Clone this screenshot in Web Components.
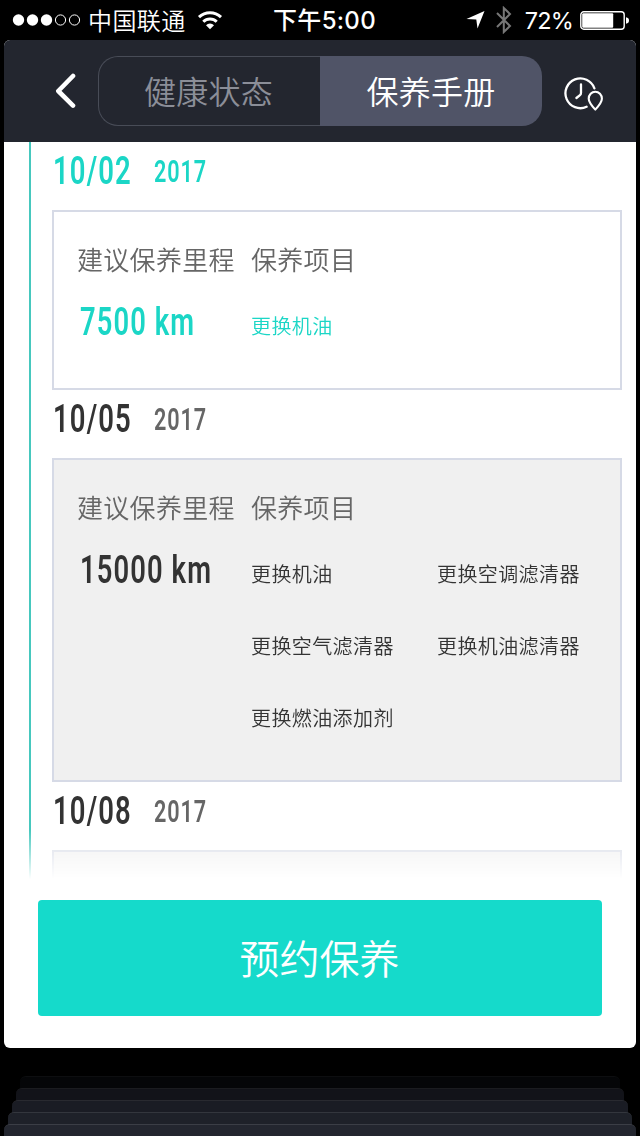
<!DOCTYPE html>
<html lang="zh-CN">
<head>
<meta charset="utf-8">
<title>保养手册</title>
<style>
body {
    margin: 0;
    width: 640px;
    height: 1136px;
    overflow: hidden;
    background: #000;
    font-family: "Noto Sans CJK SC", sans-serif;
    font-weight: 350;
}
</style>
</head>
<body>
<maintenance-app></maintenance-app>

<script>
const define = (name, html, setup) => {
    const template = document.createElement('template')
    template.innerHTML = html

    customElements.define(name, class extends HTMLElement {
        constructor() {
            super()
            this.attachShadow({ mode: 'open' })
            .appendChild(template.content.cloneNode(true))
        }

        connectedCallback() {
            if (setup) setup(this, this.shadowRoot)
        }
    })
}

/**
 * Narrow digits: the text is squeezed to the given width.
 * size is the font size, width the drawn length, both in px.
 */
define('narrow-text', `
<style>
:host { display: block; height: 28px; }
span {
    display: inline-block;
    font-family: Roboto, sans-serif;
    font-weight: 600;
    letter-spacing: 0.04em;
    white-space: pre;
    transform-origin: 0 0;
}
</style>
<span></span>
`, (host, root) => {
    const size = Number(host.getAttribute('size'))
    const width = Number(host.getAttribute('width'))
    const span = root.querySelector('span')
    host.style.width = `${width}px`
    span.textContent = host.getAttribute('value')
    span.style.fontSize = `${size}px`
    span.style.lineHeight = `${Math.round(size * 0.72)}px`
    span.style.marginLeft = '1px'
    span.style.transform = `scaleX(${(width + 1) / span.offsetWidth})`
})

define('status-bar', `
<style>
:host {
    display: flex;
    align-items: center;
    justify-content: space-between;
    height: 40px;
    padding: 0 11px 0 12px;
    box-sizing: border-box;
    color: #fff;
    font-size: 24px;
    line-height: 40px;
}
div { display: flex; align-items: center; flex: 1; }
svg { display: block; flex: none; }
.carrier { margin: 0 11px 0 7px; letter-spacing: 0.4px; }
.time { flex: none; font-family: Inter, "Noto Sans CJK SC", sans-serif; font-weight: 500; padding: 1px 0 0 8px; line-height: 39px; letter-spacing: 0.3px; }
.right { justify-content: flex-end; }
.percent { font-family: Inter, sans-serif; font-weight: 400; font-size: 23.5px; letter-spacing: -0.8px; margin: 1px 7px 0 13px; }
</style>
<div>
    <svg width="69" height="14" viewBox="0 0 69 14" fill="#fff">
        <circle cx="6.5" cy="7" r="5.7"/><circle cx="20.5" cy="7" r="5.7"/><circle cx="34.5" cy="7" r="5.7"/>
        <g fill="none" stroke="#fff"><circle cx="48.5" cy="7" r="5.1"/><circle cx="62.5" cy="7" r="5.1"/></g>
    </svg>
    <span class="carrier">中国联通</span>
    <svg width="26" height="20" viewBox="0 0 26 20" fill="none" stroke="#fff" stroke-width="3">
        <path d="M2 7.2a16 16 0 0 1 22 0M6.3 11.7a9.6 9.6 0 0 1 13.4 0"/>
        <path d="M13 19.2l-4-4a5.8 5.8 0 0 1 8 0z" fill="#fff" stroke="none"/>
    </svg>
</div>
<span class="time">下午5:00</span>
<div class="right">
    <svg width="19" height="18" viewBox="0 0 19 18"><path d="M18.5 0L11.5 17.5L10.3 8.6L.5 8z" fill="#fff"/></svg>
    <svg style="margin-left:11px" width="16" height="28" viewBox="0 0 16 28" fill="none" stroke="#777" stroke-width="2">
        <path d="M1 7l13 13l-6.2 6V2L14 8L1 21"/>
    </svg>
    <span class="percent">72%</span>
    <svg width="49" height="19" viewBox="0 0 49 19">
        <rect x=".8" y=".8" width="43.4" height="17.4" rx="3" fill="none" stroke="#fff" stroke-width="1.4"/>
        <rect x="2.2" y="2.2" width="31" height="14.6" rx="1" fill="#fff"/>
        <path d="M46 6.3q3 .5 3 3.2t-3 3.2z" fill="#fff"/>
    </svg>
</div>
`)

define('segment-tabs', `
<style>
:host {
    display: flex;
    width: 444px;
    height: 70px;
    font-size: 32px;
    line-height: 68px;
    text-align: center;
}
div { flex: none; width: 222px; box-sizing: border-box; letter-spacing: 0.3px; }
.off {
    border: 1.5px solid #484c57;
    border-right: 0;
    border-radius: 20px 0 0 20px;
    padding-right: 2px;
    line-height: 66px;
    color: #8b8e98;
}
.on { background: #505467; border-radius: 0 20px 20px 0; color: #fff; }
</style>
<div class="off"><slot name="off"></slot></div>
<div class="on"><slot name="on"></slot></div>
`)

define('nav-bar', `
<style>
:host {
    display: flex;
    align-items: center;
    height: 102px;
    padding-left: 51px;
    box-sizing: border-box;
    background: #23262f;
}
.back { margin-right: 20px; }
.history { margin: 5px 0 0 20px; }
</style>
<svg class="back" width="23" height="36" viewBox="0 0 23 36" fill="none" stroke="#fff" stroke-width="4.6" stroke-linecap="round" stroke-linejoin="round">
    <path d="M22 3L7.3 18L22 32.6" transform="translate(-4 0)"/>
</svg>
<slot></slot>
<svg class="history" width="42" height="36" viewBox="0 0 42 36" fill="none" stroke="#fff" stroke-width="2.3" stroke-linecap="round" stroke-linejoin="round">
    <path d="M32.4 12.3A14.9 14.9 0 1 0 24.6 30.8"/>
    <path d="M19 8.5v8.2q0 1.6-1 2.4l-3.6 2.9"/>
    <path d="M33.3 33.6q-6.6-7.2-6.6-10.9a6.6 6.9 0 0 1 13.2 0q0 3.7-6.6 10.9z" stroke-width="2.1"/>
</svg>
`)

define('date-row', `
<style>
:host { display: flex; align-items: flex-start; height: 68px; padding-top: 15px; box-sizing: border-box; color: #333; }
.year { margin: 4px 0 0 23px; color: #666; }
:host([active]), :host([active]) .year { color: #1bd6c6; }
</style>
<narrow-text class="day" size="39" width="78"></narrow-text>
<narrow-text class="year" size="31" width="52"></narrow-text>
`, (host, root) => {
    root.querySelector('.day').setAttribute('value', host.getAttribute('day'))
    root.querySelector('.year').setAttribute('value', host.getAttribute('year'))
    // redraw with the values in place
    root.querySelectorAll('narrow-text').forEach(el => el.replaceWith(el.cloneNode(true)))
})

define('service-card', `
<style>
:host {
    display: grid;
    grid-template-columns: 174px 1fr;
    grid-template-rows: 78px auto;
    width: 570px;
    padding: 0 0 26px 23px;
    box-sizing: border-box;
    border: 2px solid #d6dae6;
    background: #f0f0f0;
    color: #333;
}
:host([active]) { background: #fff; color: #1bd6c6; }
:host([blank]) .title { display: none; }
.title { font-size: 26px; line-height: 94px; height: 78px; color: #666; letter-spacing: 0.3px; white-space: nowrap; }
.items { display: grid; grid-template-columns: 186px 1fr; grid-auto-rows: 72px; font-size: 20px; line-height: 71px; letter-spacing: 0.4px; }
.distance { padding: 18px 0 0 2px; }
</style>
<div class="title">建议保养里程</div>
<div class="title">保养项目</div>
<div class="distance"><slot name="distance"></slot></div>
<div class="items"><slot></slot></div>
`)

define('service-timeline', `
<style>
:host {
    display: flex;
    gap: 21px;
    height: 738px;
    padding-left: 25px;
    overflow: hidden;
    -webkit-mask-image: linear-gradient(#000 688px, transparent 737px);
    mask-image: linear-gradient(#000 688px, transparent 737px);
}
.line { width: 2px; background: #46c8be; }
</style>
<div class="line"></div>
<div><slot></slot></div>
`)

define('book-button', `
<style>
:host { display: block; }
button {
    display: block;
    width: 564px;
    height: 116px;
    margin: 20px auto 0;
    padding: 0 1px 2px 0;
    border: 0;
    border-radius: 4px;
    background: #15dacb;
    color: #fff;
    font: inherit;
    font-size: 40px;
    line-height: 114px;
}
</style>
<button><slot></slot></button>
`)

define('card-stack', `
<style>
:host { display: flex; flex-direction: column; align-items: center; padding-top: 28px; }
div {
    flex: none;
    height: 20px;
    margin-bottom: -8px;
    box-sizing: border-box;
    border-top: 1px solid;
    border-radius: 6px 6px 0 0;
}
div:nth-of-type(1) { width: 600px; background: #050608; border-color: #0d0e10; }
div:nth-of-type(2) { width: 608px; background: #121319; border-color: #1b1c20; }
div:nth-of-type(3) { width: 616px; background: #1a1c24; border-color: #292a30; }
div:nth-of-type(4) { width: 624px; background: #1e2129; border-color: #33363d; }
div:nth-of-type(5) { width: 632px; background: #23262f; border-color: #3b3e46; }
</style>
<div></div><div></div><div></div><div></div><div></div>
`)

define('maintenance-app', `
<style>
:host { display: block; }
main {
    width: 632px;
    height: 1008px;
    margin: 0 auto;
    background: #fff;
    border-radius: 6px;
    overflow: hidden;
}
</style>
<status-bar></status-bar>
<main>
    <nav-bar>
        <segment-tabs>
            <span slot="off">健康状态</span>
            <span slot="on">保养手册</span>
        </segment-tabs>
    </nav-bar>
    <service-timeline>
        <date-row day="10/02" year="2017" active></date-row>
        <service-card active>
            <narrow-text slot="distance" size="39" width="114" value="7500 km"></narrow-text>
            <span>更换机油</span>
        </service-card>
        <date-row day="10/05" year="2017"></date-row>
        <service-card>
            <narrow-text slot="distance" size="39" width="131" value="15000 km"></narrow-text>
            <span>更换机油</span>
            <span>更换空调滤清器</span>
            <span>更换空气滤清器</span>
            <span>更换机油滤清器</span>
            <span>更换燃油添加剂</span>
        </service-card>
        <date-row day="10/08" year="2017"></date-row>
        <service-card blank></service-card>
    </service-timeline>
    <book-button>预约保养</book-button>
</main>
<card-stack></card-stack>
`)
</script>
</body>
</html>
